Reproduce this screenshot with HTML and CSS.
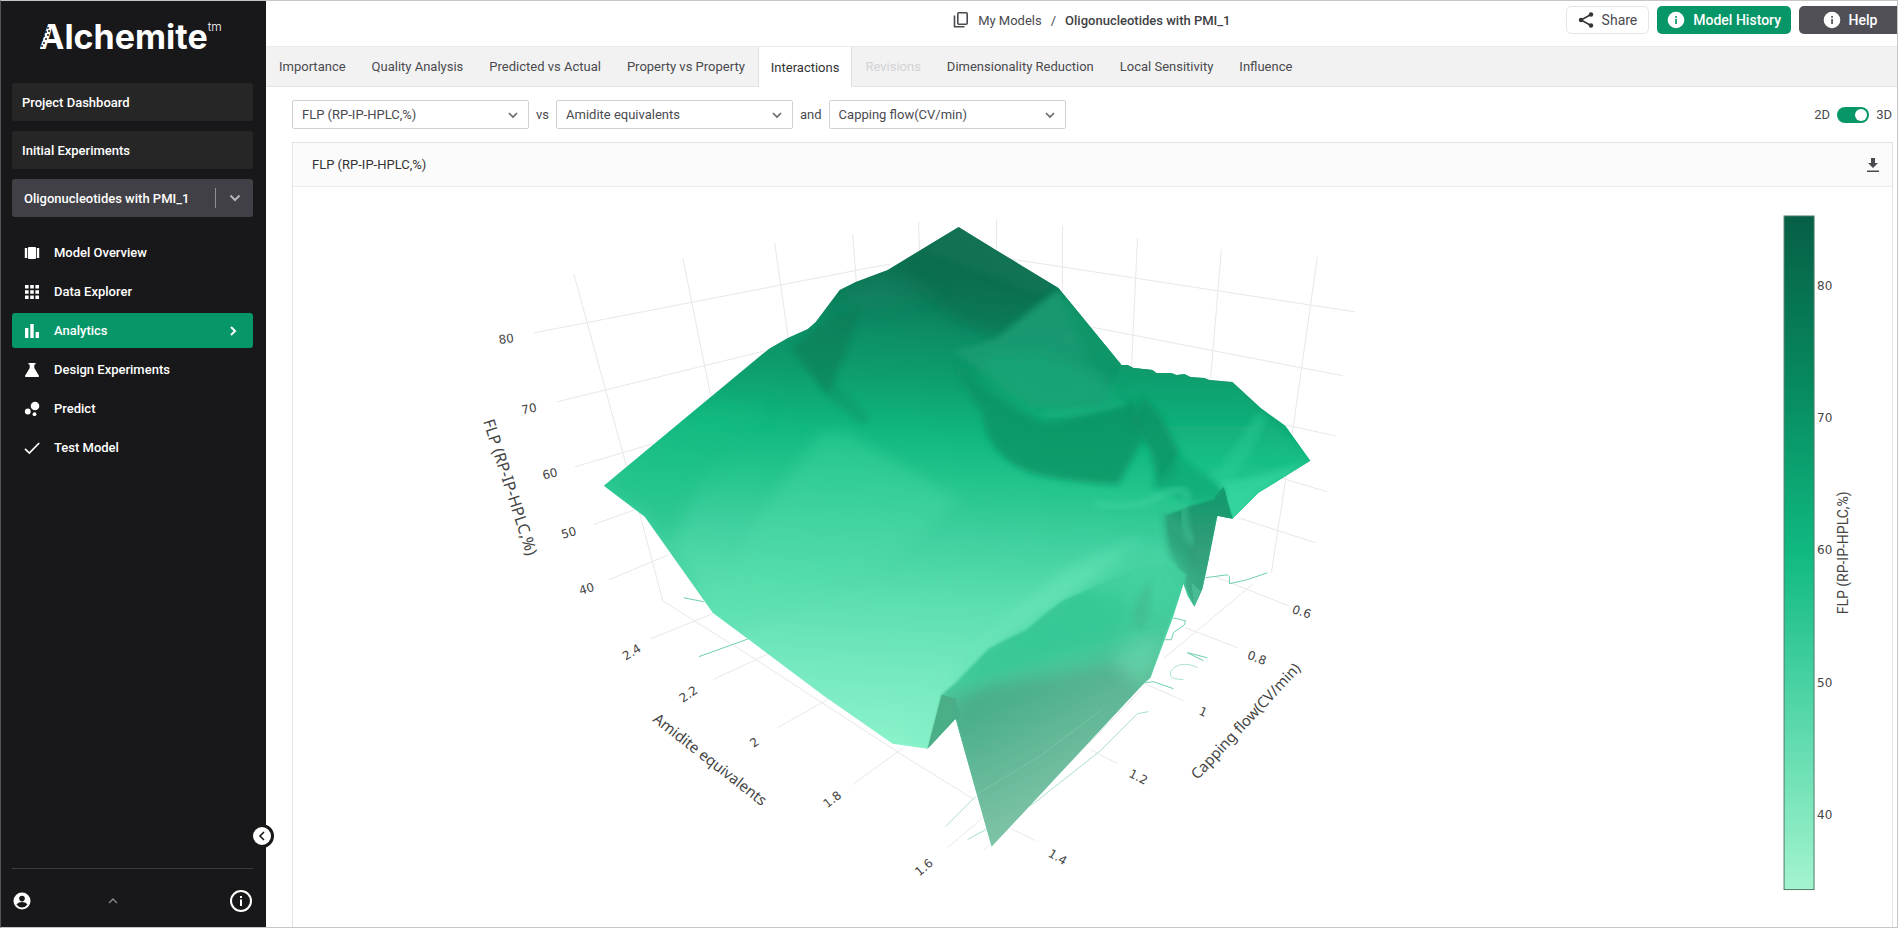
FILE: index.html
```
<!DOCTYPE html>
<html lang="en">
<head>
<meta charset="utf-8">
<title>Alchemite – Interactions</title>
<link rel="stylesheet" href="styles.css">
</head>
<body>
<div class="app">
  <aside class="sidebar">
    <div class="logo">
      <span class="logo-word">Alchemite</span><sup class="logo-tm">tm</sup>
      <svg class="logo-speckle" width="14" height="28" viewBox="0 0 14 28" aria-hidden="true">
        <g fill="#18181a"><circle cx="2" cy="20" r="1"/><circle cx="4" cy="23" r="1"/><circle cx="4" cy="17" r="1"/><circle cx="6" cy="13" r="1"/><circle cx="6" cy="20" r="1"/><circle cx="8" cy="16" r="1"/><circle cx="8" cy="9" r="1"/><circle cx="10" cy="12" r="1"/><circle cx="10" cy="5" r="1"/><circle cx="1" cy="25" r="1"/><circle cx="11" cy="8" r="1"/></g>
        <path d="M8.500 0L0 23" stroke="#18181a" stroke-width="1.500"/>
      </svg>
    </div>
    <div class="projects">
      <button class="project" type="button">Project Dashboard</button>
      <button class="project" type="button">Initial Experiments</button>
      <button class="project current" type="button"><span>Oligonucleotides with PMI_1</span>
        <svg class="project-more" width="12" height="8" viewBox="0 0 12 8"><path d="M1.500 1.500L6 6l4.500-4.500" fill="none" stroke="#b5b5b9" stroke-width="2"/></svg></button>
    </div>
    <nav class="nav">
      <a class="nav-item" href="#"><svg class="ico" viewBox="0 0 18 18"><g fill="#fff"><rect x="5" y="3" width="8" height="12" rx="1"/><rect x="1.800" y="4" width="2.400" height="10"/><rect x="13.800" y="4" width="2.400" height="10"/></g></svg>Model Overview</a>
      <a class="nav-item" href="#"><svg class="ico" viewBox="0 0 18 18"><path fill="#fff" d="M2 2h3.600v3.600H2zM7.200 2h3.600v3.600H7.200zM12.400 2H16v3.600h-3.600zM2 7.200h3.600v3.600H2zM7.200 7.200h3.600v3.600H7.200zM12.400 7.200H16v3.600h-3.600zM2 12.400h3.600V16H2zM7.200 12.400h3.600V16H7.200zM12.400 12.400H16V16h-3.600z"/></svg>Data Explorer</a>
      <a class="nav-item active" href="#"><svg class="ico" viewBox="0 0 18 18"><path fill="#fff" d="M2 6h3.400v10H2zM7.300 2h3.400v14H7.300zM12.600 10H16v6h-3.400z"/></svg>Analytics
        <svg class="nav-arrow" width="8" height="12" viewBox="0 0 8 12"><path d="M2 2l4 4-4 4" fill="none" stroke="#fff" stroke-width="2"/></svg></a>
      <a class="nav-item" href="#"><svg class="ico" viewBox="0 0 18 18"><path fill="#fff" d="M5.500 2h7v1.500h-1.200V7l4.500 7.500c.4.800 0 1.500-.8 1.500H3c-.8 0-1.200-.7-.8-1.500L6.700 7V3.500H5.500z"/></svg>Design Experiments</a>
      <a class="nav-item" href="#"><svg class="ico" viewBox="0 0 18 18"><g fill="#fff"><circle cx="12" cy="6" r="4.300"/><circle cx="4.800" cy="11.500" r="2.900"/><circle cx="11.500" cy="14.200" r="1.900"/></g></svg>Predict</a>
      <a class="nav-item" href="#"><svg class="ico" viewBox="0 0 18 18"><path fill="none" stroke="#fff" stroke-width="1.700" d="M2 9.800l4.300 4.200L16.200 4"/></svg>Test Model</a>
    </nav>
    <footer class="side-foot">
      <svg width="20" height="20" viewBox="0 0 20 20"><circle cx="10" cy="10" r="8.500" fill="#fff"/><circle cx="10" cy="7.600" r="2.800" fill="#18181a"/><path d="M4.500 13.600c1.200-1.900 3.400-2.600 5.500-2.600s4.300.7 5.500 2.600A6.700 6.700 0 0 1 10 16.500a6.700 6.700 0 0 1-5.500-2.900z" fill="#18181a"/></svg>
      <svg class="caret" width="10" height="6" viewBox="0 0 10 6"><path d="M1 5l4-4 4 4" fill="none" stroke="#8b8b8f" stroke-width="1.300"/></svg>
      <svg width="24" height="24" viewBox="0 0 24 24"><circle cx="12" cy="12" r="10" fill="none" stroke="#fff" stroke-width="2"/><path d="M11 10.500h2V17h-2zM11 7h2v2h-2z" fill="#fff"/></svg>
    </footer>
    <button class="collapse" type="button" aria-label="Collapse menu"><svg width="8" height="10" viewBox="0 0 8 10"><path d="M6 1L2 5l4 4" fill="none" stroke="#18181a" stroke-width="1.600"/></svg></button>
  </aside>

  <main class="main">
    <header class="topbar">
      <div class="crumbs">
        <svg width="16" height="18" viewBox="0 0 16 18"><rect x="4.800" y="1.800" width="9.400" height="11.400" rx="1" fill="none" stroke="#4a4a50" stroke-width="1.600"/><path d="M1.500 4.500v11.200h10" fill="none" stroke="#4a4a50" stroke-width="1.600"/></svg>
        <a href="#">My Models</a><span>/</span><strong>Oligonucleotides with PMI_1</strong>
      </div>
      <div class="actions">
        <button class="btn share" type="button"><svg width="16" height="18" viewBox="0 0 16 18"><path d="M13 3.500L3 9l10 5.500" fill="none" stroke="#333" stroke-width="1.500"/><g fill="#333"><circle cx="13" cy="3.500" r="2.200"/><circle cx="3" cy="9" r="2.200"/><circle cx="13" cy="14.500" r="2.200"/></g></svg>Share</button>
        <button class="btn history" type="button"><svg width="18" height="18" viewBox="0 0 18 18"><circle cx="9" cy="9" r="8.300" fill="#fff"/><path d="M8.200 8h1.700v5H8.200zM8.200 5h1.700v1.700H8.200z" fill="#069668"/></svg>Model History</button>
        <button class="btn help" type="button"><svg width="18" height="18" viewBox="0 0 18 18"><circle cx="9" cy="9" r="8.300" fill="#fff"/><path d="M8.200 8h1.700v5H8.200zM8.200 5h1.700v1.700H8.200z" fill="#504f56"/></svg>Help</button>
      </div>
    </header>

    <nav class="tabs">
      <a class="tab" href="#">Importance</a>
      <a class="tab" href="#">Quality Analysis</a>
      <a class="tab" href="#">Predicted vs Actual</a>
      <a class="tab" href="#">Property vs Property</a>
      <a class="tab selected" href="#">Interactions</a>
      <a class="tab disabled">Revisions</a>
      <a class="tab" href="#">Dimensionality Reduction</a>
      <a class="tab" href="#">Local Sensitivity</a>
      <a class="tab" href="#">Influence</a>
    </nav>

    <div class="filters">
      <span class="pick"><select aria-label="Target property"><option>FLP (RP-IP-HPLC,%)</option></select><svg width="12" height="8" viewBox="0 0 12 8"><path d="M2 2l4 4 4-4" fill="none" stroke="#66666c" stroke-width="1.600"/></svg></span>
      <label for="xaxis">vs</label>
      <span class="pick"><select id="xaxis"><option>Amidite equivalents</option></select><svg width="12" height="8" viewBox="0 0 12 8"><path d="M2 2l4 4 4-4" fill="none" stroke="#66666c" stroke-width="1.600"/></svg></span>
      <label for="yaxis">and</label>
      <span class="pick"><select id="yaxis"><option>Capping flow(CV/min)</option></select><svg width="12" height="8" viewBox="0 0 12 8"><path d="M2 2l4 4 4-4" fill="none" stroke="#66666c" stroke-width="1.600"/></svg></span>
      <label class="dim"><span>2D</span><input class="switch" type="checkbox" checked><span>3D</span></label>
    </div>

    <section class="panel">
      <header class="panel-head"><span>FLP (RP-IP-HPLC,%)</span>
        <button class="download" type="button" aria-label="Download"><svg width="12" height="16" viewBox="0 0 12 16"><path d="M4 1h4v5h3l-5 5-5-5h3zM0 13.500h12V15H0z" fill="#4a4a4f"/></svg></button></header>
      <svg class="plot" viewBox="292 186 1600 738" preserveAspectRatio="xMidYMin meet" role="img" aria-label="3D surface of FLP against Amidite equivalents and Capping flow">
        <defs>
          <linearGradient id="bar" x1="0" y1="0" x2="0" y2="1">
            <stop offset="0" stop-color="#065f46"/><stop offset=".26" stop-color="#078b60"/><stop offset=".5" stop-color="#10b981"/><stop offset=".68" stop-color="#44d0a0"/><stop offset="1" stop-color="#a3f4cf"/>
          </linearGradient>
          <linearGradient id="base" gradientUnits="userSpaceOnUse" x1="945" y1="226" x2="915" y2="748">
            <stop offset="0" stop-color="#0f6f52"/><stop offset=".1" stop-color="#0a7655"/><stop offset=".2" stop-color="#0c8c65"/><stop offset=".3" stop-color="#0ea06e"/><stop offset=".4" stop-color="#10b87f"/><stop offset=".49" stop-color="#25c58d"/><stop offset=".6" stop-color="#42d1a0"/><stop offset=".72" stop-color="#5cdfaf"/><stop offset=".85" stop-color="#74e8bf"/><stop offset="1" stop-color="#8cf3cb"/>
          </linearGradient>
          <linearGradient id="fold" gradientUnits="userSpaceOnUse" x1="1020" y1="590" x2="1070" y2="790">
            <stop offset="0" stop-color="#3acb98"/><stop offset=".35" stop-color="#46cb9c"/><stop offset=".55" stop-color="#55b690"/><stop offset="1" stop-color="#7cc4a5"/>
          </linearGradient>
          <linearGradient id="skirt" gradientUnits="userSpaceOnUse" x1="970" y1="680" x2="1040" y2="820">
            <stop offset="0" stop-color="#3eaa84"/><stop offset="1" stop-color="#80c3a7"/>
          </linearGradient>
          <linearGradient id="pit" x1="0" y1="0" x2="0" y2="1"><stop offset="0" stop-color="#0f986b"/><stop offset=".4" stop-color="#2d9c77"/><stop offset="1" stop-color="#3fae88"/></linearGradient>
          <linearGradient id="wing" gradientUnits="userSpaceOnUse" x1="0" y1="365" x2="0" y2="518"><stop offset="0" stop-color="#0f9a6b"/><stop offset=".35" stop-color="#11ad79"/><stop offset=".6" stop-color="#15bd85"/><stop offset="1" stop-color="#33d39c"/></linearGradient>
          <filter id="b1" x="-10%" y="-10%" width="120%" height="120%"><feGaussianBlur stdDeviation="1"/></filter>
          <filter id="b3" x="-20%" y="-20%" width="140%" height="140%"><feGaussianBlur stdDeviation="3"/></filter>
          <filter id="b8" x="-30%" y="-30%" width="160%" height="160%"><feGaussianBlur stdDeviation="8"/></filter>
          <clipPath id="outline"><path id="edge" d="M603 485L768 348 787 337 807 328 815 321 839 289 855 281 887 269 958 226 997 250 1058 287 1121 364 1127 364 1133 367 1152 369 1156 372 1171 372 1176 374 1184 373 1190 376 1204 377 1209 379 1232 381 1260 407 1285 425 1310 460 1258 492 1232 518 1217 515 1208 560 1202 588 1194 606 1187 595 1183 583 1172 618 1150 677 1143 683 991 846 955 718 927 748 892 743 823 695 747 638 712 612 661 540 644 516z"/></clipPath>
        </defs>

        <g class="grid">
          <path d="M573 273L625 463 640 517 662 600M682 257L710 395M774 242L788 340M852 233L856 285M918 221L919 250M996 218V255M1062 225V290M1137 237L1131 367M1221 248L1210 380M1317 256L1293 425 1285 480 1271 572"/>
          <path d="M533 332L863 268 890 263M556 401L764 350M574 466L652 443M592 524L634 509M608 579L668 554M1010 258L1355 311M1090 326L1343 375M1285 424L1335 435M1280 477L1327 491M1238 517L1315 542"/>
          <path d="M662 600L760 662 898 752 972 798M650 638L712 613M712 679L770 652M777 727L830 697M852 784L903 747M947 847L985 815M1215 576L1288 605M1185 627L1237 647M1140 681L1183 700M1090 749L1117 763M1010 828L1035 840M1253 583L1163 658M1140 690L983 850"/>
        </g>
        <g class="contour">
          <path d="M683 597L703 601M698 656L748 638M1205 577L1227 574 1229 576V583Q1247 580 1267 572M1172 617L1185 620 1184 624 1173 632 1171 639 1163 639M1207 657L1187 652 1203 660M1145 682L1153 681 1173 688"/>
          <path class="faint" d="M1197 667C1182 659 1170 667 1170 673S1176 678 1183 679M1148 711L1137 713 1100 750 1033 803 967 839M945 826L975 796"/>
        </g>

        <use href="#edge" fill="url(#base)"/>
        <g clip-path="url(#outline)">
          <path d="M958 226L1058 287 1000 336 960 322 890 268z" fill="#086648" opacity=".45" filter="url(#b8)"/>
          <path d="M958 222L1062 287 1035 293 925 250z" fill="#278068" opacity=".25" filter="url(#b3)"/>
          <path d="M839 289L887 269 940 290 860 312z" fill="#208267" opacity=".35" filter="url(#b8)"/>
          <path d="M1058 288L995 338 953 350 1030 405 1140 410 1121 364z" fill="#1e9c74" opacity=".85" filter="url(#b3)"/>
          <path d="M1060 290L1072 316 1088 364 1125 395 1180 420 1150 360z" fill="#0d9568" opacity=".8" filter="url(#b3)"/>
          <path d="M790 347L832 316 860 308 845 352 827 394 806 368z" fill="#087a54" opacity=".55" filter="url(#b3)"/>
          <path d="M815 365L850 395 870 418 862 424 830 400z" fill="#0b8c60" opacity=".35" filter="url(#b3)"/>
          <path d="M820 432L845 432 880 452 960 500 890 560 700 640 755 520z" fill="#55e0ad" opacity=".3" filter="url(#b8)"/>
          <path d="M603 485L700 400 770 405 700 480 661 560 712 612 645 516z" fill="#13bd82" opacity=".4" filter="url(#b8)"/>
          <path d="M1100 410L1121 364 1232 381 1310 460 1232 518 1222 487 1190 460z" fill="url(#wing)" filter="url(#b3)"/>
          <path d="M1255 414L1222 463 1205 482 1225 487 1250 455 1268 415z" fill="#31d29a" opacity=".35" filter="url(#b3)"/>
          <path d="M1215 483L1260 475 1310 460 1258 492 1232 520z" fill="#3ddaa4" opacity=".55" filter="url(#b3)"/>
          <path d="M955 360C975 380 1015 408 1042 420 1070 420 1110 402 1135 400L1142 440 1128 465 1118 484C1090 482 1060 480 1030 472 1000 460 983 440 982 412 965 390 955 375 955 360z" fill="#0c9466" opacity=".82" filter="url(#b3)"/>
          <path d="M985 380Q1035 420 1062 415T1120 402L1100 375 1040 352 980 355z" fill="#18aa78" opacity=".55" filter="url(#b8)"/>
          <path d="M1044 414Q1070 414 1125 401" fill="none" stroke="#1fb482" stroke-width="6" opacity=".7" filter="url(#b3)"/>
          <path d="M1143 395L1160 415 1178 450 1175 475 1158 485 1150 450 1130 420z" fill="#0b9164" opacity=".75" filter="url(#b3)"/>
          <path d="M1178 455L1205 475 1222 487 1222 498 1190 502 1150 485z" fill="#0fa774" opacity=".7" filter="url(#b3)"/>
          <path d="M1095 503Q1135 510 1160 495T1188 500" fill="none" stroke="#43d6a2" stroke-width="5" opacity=".7" filter="url(#b3)"/>
          <path d="M1223 486L1233 520 1214 517 1215 495z" fill="#159f72"/>
          <path d="M1190 505L1218 497 1224 488 1228 520 1217 516 1204 590 1194 608 1180 575 1170 545 1166 515z" fill="url(#pit)" filter="url(#b1)"/>
          <path d="M1163 512L1178 518 1190 540 1186 575 1168 556z" fill="#2fa57d" opacity=".9" filter="url(#b3)"/>
          <path d="M1183 506Q1184 530 1192 542" fill="none" stroke="#45c798" stroke-width="5" opacity=".8" filter="url(#b3)"/>
          <path d="M1191 582L1194 606 1200 590z" fill="#55c8a0" opacity=".6"/>
          <path d="M1145 538Q1070 555 1010 615L940 690 900 744 927 748 941 694 1000 640 1100 580z" fill="#79ecc3" opacity=".4" filter="url(#b8)"/>
          <path d="M941 694L955 682 988 648Q1010 636 1025 630 1045 612 1062 600 1085 590 1100 583L1140 566 1172 564 1186 574 1183 585 1150 677 991 848 955 718 927 750z" fill="url(#fold)" filter="url(#b1)"/>
          <path d="M1085 590L1130 545 1165 545 1186 575 1170 610 1110 615z" fill="#46d3a2" opacity=".7" filter="url(#b8)"/>
          <path d="M955 685Q1010 635 1080 595L1120 590 1130 610 1110 640 1040 660z" fill="#2cc590" opacity=".5" filter="url(#b8)"/>
          <path d="M941 694L955 698 960 716 927 748z" fill="#4bae87"/>
          <path d="M955 705Q975 685 1030 680L1080 674 1130 662 1148 682 991 848 955 718z" fill="url(#skirt)" filter="url(#b8)"/>
          <path d="M952 725L975 720 1040 725 1120 700 991 850z" fill="url(#skirt)" opacity=".7" filter="url(#b3)"/>
          <path d="M1110 660Q1135 635 1150 638L1164 640 1150 680 1138 685z" fill="#6bdab0" opacity=".6" filter="url(#b8)"/>
          <path d="M1150 580Q1134 595 1132 615L1140 632 1150 610z" fill="#42b78c" opacity=".55" filter="url(#b3)"/>
          <path d="M977 793L1040 755 1100 710" fill="none" stroke="#8bcfb4" opacity=".5"/>
        </g>

        <g class="tick">
          <text transform="translate(506 342) rotate(-8)">80</text>
          <text transform="translate(529 412) rotate(-10)">70</text>
          <text transform="translate(550 477) rotate(-13)">60</text>
          <text transform="translate(569 536) rotate(-15)">50</text>
          <text transform="translate(587 592) rotate(-17)">40</text>
          <text transform="translate(633 655) rotate(-32)">2.4</text>
          <text transform="translate(690 697) rotate(-34)">2.2</text>
          <text transform="translate(756 745) rotate(-36)">2</text>
          <text transform="translate(834 802) rotate(-38)">1.8</text>
          <text transform="translate(926 870) rotate(-40)">1.6</text>
          <text transform="translate(1300 615) rotate(19)">0.6</text>
          <text transform="translate(1255 661) rotate(21)">0.8</text>
          <text transform="translate(1201 715) rotate(24)">1</text>
          <text transform="translate(1136 780) rotate(27)">1.2</text>
          <text transform="translate(1055 860) rotate(31)">1.4</text>
        </g>
        <g class="axis">
          <text class="z-title" transform="translate(504 488) rotate(72)">FLP (RP-IP-HPLC,%)</text>
          <text transform="translate(706 763) rotate(38)">Amidite equivalents</text>
          <text transform="translate(1249 724) rotate(-47)">Capping flow(CV/min)</text>
        </g>

        <rect x="1784" y="215" width="30" height="674" fill="url(#bar)" stroke="#4d7a69"/>
        <g class="bar-tick">
          <text x="1817" y="289">80</text><text x="1817" y="421">70</text><text x="1817" y="553">60</text><text x="1817" y="686">50</text><text x="1817" y="818">40</text>
        </g>
        <text class="bar-title" transform="translate(1848 552) rotate(-90)">FLP (RP-IP-HPLC,%)</text>
      </svg>
    </section>
  </main>
</div>
</body>
</html>
```
FILE: styles.css
```
* { box-sizing: border-box; }
body { margin: 0; font-family: Roboto, "Liberation Sans", sans-serif; font-size: 13px; color: #4a4a4f; background: #fff; }
button, select { font: inherit; }
a { color: inherit; text-decoration: none; }
svg { display: block; flex: none; }

.app { display: flex; height: 100vh; overflow: hidden; border: 1px solid #c6c6c6; border-left-color: #555; }

.sidebar { position: relative; flex: none; width: 265px; padding: 0 13px 0 11px; display: flex; flex-direction: column; background: #18181a; color: #fff; font-weight: 500; }
.logo { position: relative; height: 82px; padding: 14px 0 0 27px; display: flex; align-items: flex-start; font-family: Inter, sans-serif; }
.logo-word { font-size: 34px; line-height: 44px; font-weight: 700; }
.logo-tm { font-size: 12px; line-height: 24px; font-weight: 300; }
.logo-speckle { position: absolute; left: 26px; top: 22px; }

.projects { display: flex; flex-direction: column; gap: 10px; }
.project { height: 38px; padding: 0 10px; border: 0; border-radius: 3px; background: #262627; color: #fff; text-align: left; font-weight: 500; }
.project.current { display: flex; align-items: center; padding: 0 12px; background: #414046; }
.project-more { box-sizing: content-box; margin-left: auto; padding: 6px 0 6px 13px; border-left: 1px solid #8f8f94; }

.nav { display: flex; flex-direction: column; gap: 4px; margin-top: 18px; }
.nav-item { display: flex; align-items: center; gap: 13px; height: 35px; padding: 0 16px 0 11px; border-radius: 3px; }
.nav-item.active { background: #069668; }
.ico { width: 18px; height: 18px; }
.nav-arrow { margin-left: auto; }

.side-foot { margin-top: auto; height: 59px; padding: 5px 0 0; border-top: 1px solid #3c3c3f; display: flex; align-items: center; }
.side-foot .caret { margin: 0 auto 0 76px; }
.collapse { position: absolute; right: -8px; bottom: 79px; width: 24px; height: 24px; padding: 0; border: 3px solid #18181a; border-radius: 50%; background: #fff; display: flex; align-items: center; justify-content: center; }

.main { flex: 1; min-width: 0; display: flex; flex-direction: column; }
.topbar { flex: none; height: 45px; display: flex; align-items: center; justify-content: flex-end; padding-bottom: 7px; }
.crumbs { flex: 1; display: flex; align-items: center; justify-content: center; gap: 9px; padding-left: 352px; }
.crumbs strong { font-weight: 500; color: #3f3f45; }
.actions { display: flex; gap: 8px; margin-right: -4px; }
.btn { height: 28px; border: 1px solid transparent; border-radius: 5px; font-size: 14px; display: flex; align-items: center; justify-content: center; gap: 8px; color: #fff; padding: 0 9px; font-weight: 500; }
.share { gap: 8px; padding: 0 11px; background: #fff; border-color: #e6e6e8; color: #4a4a4f; font-weight: 400; }
.history { background: #069668; }
.help { width: 102px; background: #504f56; }

.tabs { flex: none; display: flex; height: 41px; background: #f2f2f2; border-top: 1px solid #ebebeb; border-bottom: 1px solid #e6e6e6; }
.tab { display: flex; align-items: center; padding: 0 12px; border: 0 solid transparent; border-width: 0 1px; white-space: nowrap; }
.tab.selected { background: #fff; border-color: #dedede; margin-bottom: -1px; color: #333; }
.tab.disabled { color: #d3d3d5; }

.filters { flex: none; display: flex; align-items: center; gap: 7px; padding: 13px 5px 13px 26px; }
.pick { position: relative; width: 237px; }
.pick select { appearance: none; width: 100%; height: 29px; padding: 0 28px 0 9px; border: 1px solid #d2d2d4; border-radius: 2px; background: #fff; color: #4a4a4f; display: block; }
.pick svg { position: absolute; right: 10px; top: 11px; pointer-events: none; }
.dim { margin-left: auto; display: flex; align-items: center; gap: 7px; }
.switch { appearance: none; margin: 0; width: 32px; height: 16px; padding: 2px; border-radius: 8px; background: #069668; display: flex; justify-content: flex-end; }
.switch::before { content: ""; width: 12px; height: 12px; border-radius: 50%; background: #fff; }

.panel { flex: 1; min-height: 0; margin: 0 4px 0 26px; border: 1px solid #e2e2e3; border-bottom: 0; display: flex; flex-direction: column; }
.panel-head { flex: none; height: 44px; padding: 0 13px 0 19px; display: flex; align-items: center; justify-content: space-between; background: #fbfbfb; border-bottom: 1px solid #ebebeb; color: #333; }
.download { border: 0; padding: 0; background: none; }

.plot { flex: 1; width: 100%; min-height: 0; }
.grid path { fill: none; stroke: #e9e7e8; }
.contour path { fill: none; stroke: #6fcfaa; }
.contour .faint { stroke: #a8e0cb; }
.tick text, .bar-tick text { font: 12px "DejaVu Sans", sans-serif; fill: #444; }
.tick text, .axis text, .bar-title { text-anchor: middle; }
.axis text { font: 15px "Noto Sans", sans-serif; fill: #444; }
.axis .z-title { font-size: 16px; }
.bar-title { font: 14px Roboto, sans-serif; fill: #444; }
```
